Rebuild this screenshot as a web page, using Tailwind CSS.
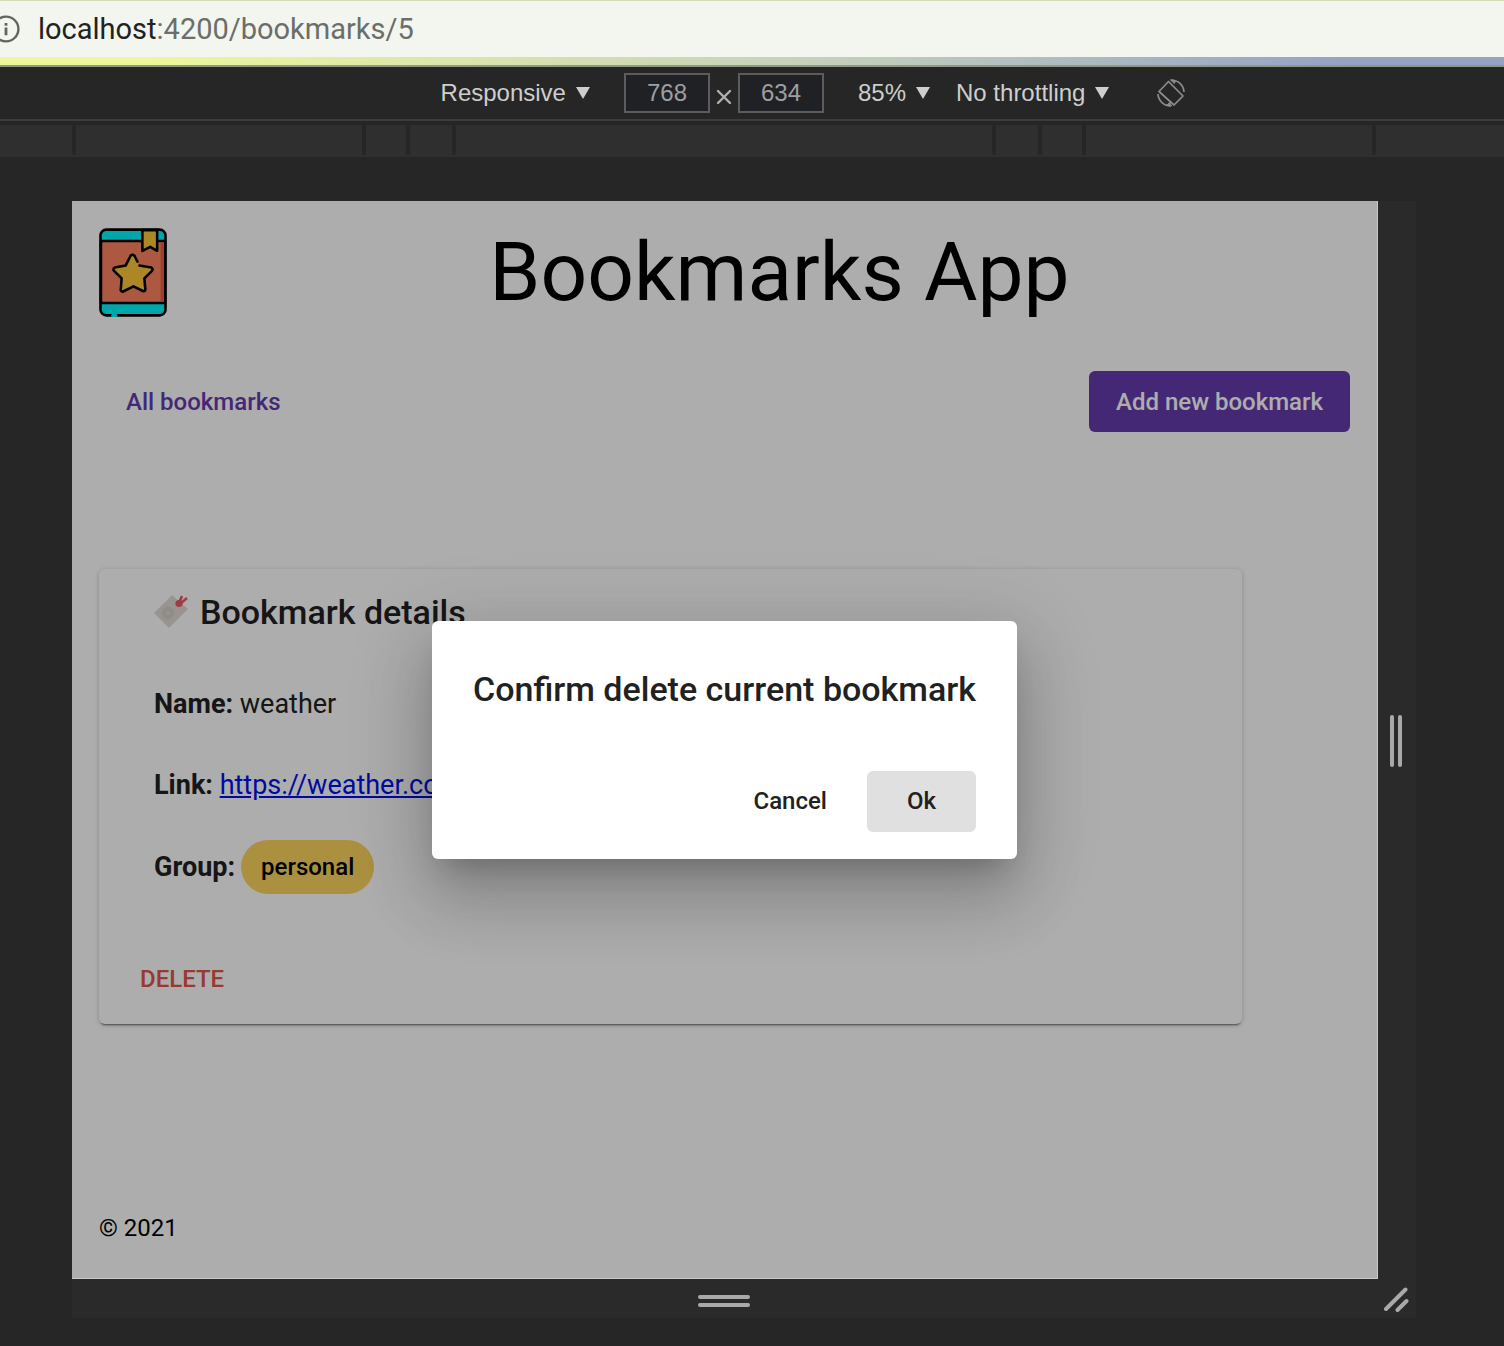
<!DOCTYPE html>
<html lang="en">
<head>
<meta charset="utf-8">
<title>Bookmarks App</title>
<script src="https://cdn.jsdelivr.net/npm/@tailwindcss/browser@4"></script>
</head>
<body class="flex min-h-screen flex-col bg-[#262626] font-['Roboto',sans-serif]">

<!-- Address bar -->
<div class="flex h-[57px] items-center gap-[18px] overflow-hidden border-t border-[#d5dcb4] bg-[#f3f5ef]">
  <svg class="-ml-2 size-7 shrink-0" viewBox="0 0 28 28" fill="none" stroke="#63665f" stroke-width="2.4"><circle cx="14" cy="14" r="12.4"/><path d="M14 12.6v7.6M14 8v2.8" stroke-width="2.8"/></svg>
  <div role="textbox" aria-label="Address" class="text-[29px] leading-8 text-[#6b6e69]"><span class="text-[#202321]">localhost</span>:4200/bookmarks/5</div>
</div>
<div class="h-2.5 border-b-2 border-[#8f9885] bg-linear-to-r from-[#eef69b] from-10% via-[#c4d0bb] via-55% to-[#94a2c4] to-90%"></div>

<!-- Device toolbar -->
<div class="flex h-[54px] items-center justify-center border-b-2 border-[#3c3c3c] pl-[122px] font-['Liberation_Sans',Arial,sans-serif] text-2xl text-[#cecece]">
  <label class="flex items-center gap-[10px]"><select aria-label="Device" class="field-sizing-content appearance-none bg-transparent"><option>Responsive</option></select>
    <svg class="h-3 w-3.5" viewBox="0 0 14 12"><path d="M0 0h14L7 12z" fill="#cecece"/></svg></label>
  <input aria-label="Width" value="768" class="ml-[34px] h-10 w-[86px] border-2 border-[#5c5c5c] bg-[#202124] text-center text-[#9d9fa1]">
  <svg class="mx-1.5 mt-2 size-4" viewBox="0 0 16 16" stroke="#b0b0b0" stroke-width="2.4" stroke-linecap="round"><path d="M2 2l12 12M14 2L2 14"/></svg>
  <input aria-label="Height" value="634" class="h-10 w-[86px] border-2 border-[#5c5c5c] bg-[#202124] text-center text-[#9d9fa1]">
  <label class="ml-[34px] flex items-center gap-[10px]"><select aria-label="Zoom" class="field-sizing-content appearance-none bg-transparent"><option>85%</option></select>
    <svg class="h-3 w-3.5" viewBox="0 0 14 12"><path d="M0 0h14L7 12z" fill="#cecece"/></svg></label>
  <label class="ml-[26px] flex items-center gap-[10px]"><select aria-label="Throttling" class="field-sizing-content appearance-none bg-transparent"><option>No throttling</option></select>
    <svg class="h-3 w-3.5" viewBox="0 0 14 12"><path d="M0 0h14L7 12z" fill="#cecece"/></svg></label>
  <button aria-label="Rotate" class="ml-12"><svg class="size-7" viewBox="0 0 28 28" fill="none" stroke="#8c8c8c" stroke-width="1.7"><path d="M2 12.5 11.5 2.5 26 17 17 26z" stroke-linejoin="round"/><path d="M14 1c7 0 12.600 5 13 12M14 27C7 27 1.400 22 1 15"/><path d="M13.500 1l5 .5-1 3zM14.500 27l-5-.5 3-3z" fill="#8c8c8c" stroke-width="1"/></svg></button>
</div>

<!-- Breakpoint ruler -->
<div class="mt-1 grid h-8 grid-cols-[72px_286fr_40fr_42fr_536fr_42fr_40fr_286fr_128px] gap-1 border-b-2 border-[#2f2f2f]">
  <i class="bg-[#2f2f2f]"></i><i class="bg-[#2f2f2f]"></i><i class="bg-[#2f2f2f]"></i><i class="bg-[#2f2f2f]"></i><i class="bg-[#2f2f2f]"></i><i class="bg-[#2f2f2f]"></i><i class="bg-[#2f2f2f]"></i><i class="bg-[#2f2f2f]"></i><i class="bg-[#2f2f2f]"></i>
</div>

<!-- Emulated device with resize handles -->
<div class="flex grow flex-col pt-11 pr-[88px] pb-7 pl-[72px]">
  <div class="grid grow grid-cols-[1fr_38px] grid-rows-[1fr_39px] bg-[#2a2a2a]">
    <div class="relative flex flex-col border-r border-b border-[#c8c8c8] bg-white">
      <header class="flex items-start gap-[41px] px-[27px] pt-[27px]">
        <svg class="h-[90px] w-[69px] shrink-0" viewBox="0 0 70 91" stroke="#000" stroke-width="2.6" stroke-linejoin="round" stroke-linecap="round">
          <rect x="1.500" y="1.500" width="66" height="87" rx="6" fill="#00f6fb"/>
          <path d="M2 13h65v63H2z" fill="#ff8362"/><path d="M62.500 14.300h3.500v60.400h-3.500z" fill="#e9603f" stroke="none"/>
          <path d="M44 2h15v21l-7-4-8 4z" fill="#ffc638"/>
          <path d="M39 34l-3-6q-2-2-4 0l-5 10-11 2q-2 1-1 3l8 8-1 12q1 2 3 1l10-5 10 5q2 0 2-2l-1-11 8-8q1-2-1-3l-12-2" fill="#ffc638"/>
          <path d="M14 88.500h3" stroke="#00f6fb" stroke-width="3.500"/>
        </svg>
        <h1 class="grow text-center text-[82px] leading-[88px] text-black">Bookmarks App</h1>
      </header>
      <nav class="mt-[53px] flex h-[61px] items-center justify-between px-[27px] text-2xl font-medium">
        <a href="#" class="px-[27px] text-[#653cae]">All bookmarks</a>
        <button class="h-full rounded-md bg-[#653cae] px-[27px] text-white">Add new bookmark</button>
      </nav>
      <main class="mt-[137px] mr-[135px] ml-[27px] flex h-[455px] flex-col rounded-md px-[55px] pt-[23px] text-[27px] text-[#212121] shadow-[0_3px_2px_-2px_rgba(0,0,0,.5),0_1px_5px_rgba(0,0,0,.22)]">
        <h2 class="flex items-center gap-3 text-[34px] leading-10 font-medium">
          <svg class="size-[34px]" viewBox="0 0 34 34"><path d="M18 0 34 14 15 33 0 18z" fill="#e0dbd5"/><g stroke="#cbc5be" stroke-width="1"><path d="M14 11v14M7 18h14M9 13l10 10M19 13L9 23M11.500 12l5 12M16.500 12l-5 12M8 15.500l12 5M8 20.500l12-5"/></g><circle cx="14" cy="18" r="2.500" fill="#ddd8d2"/><circle cx="25" cy="8.500" r="3.600" fill="#e75a60"/><path d="M25 8l3-7M26 9l7-6" stroke="#e75a60" stroke-width="2.600"/></svg>
          Bookmark details</h2>
        <p class="mt-[59px] h-[27px] leading-[27px]"><b>Name:</b> weather</p>
        <p class="mt-[54px] h-[27px] leading-[27px]"><b>Link:</b> <a href="#" class="text-[#0010ee] underline">https://weather.com</a></p>
        <p class="mt-[41px] flex h-[54px] items-center gap-1.5"><b>Group:</b> <span class="flex h-[54px] items-center rounded-full bg-[#fbd55d] px-5 text-2xl font-medium text-black">personal</span></p>
        <button class="mt-[55px] -ml-3.5 self-start text-2xl leading-[60px] font-medium text-[#e05649]">DELETE</button>
      </main>
      <footer class="mt-auto px-[27px] pb-[34px] text-2xl text-black">© 2021</footer>

      <!-- Confirmation dialog -->
      <div class="absolute inset-0 flex items-center justify-center bg-black/32">
        <div role="dialog" aria-labelledby="dlg" class="rounded-md bg-white px-[41px] pt-[41px] pb-[27px] text-[#212121] shadow-[0_19px_26px_-12px_rgba(0,0,0,.2),0_41px_65px_5px_rgba(0,0,0,.14),0_15px_78px_14px_rgba(0,0,0,.12)]">
          <h2 id="dlg" class="text-[34px] leading-[54px] font-medium">Confirm delete current bookmark</h2>
          <div class="mt-[55px] flex justify-end text-2xl font-medium">
            <button class="h-[61px] px-10">Cancel</button>
            <button class="h-[61px] rounded-md bg-[#e0e0e0] px-10">Ok</button>
          </div>
        </div>
      </div>
    </div>
    <div class="flex items-center justify-center gap-1 pt-0.5 pr-0.5"><i class="h-[52px] w-1 rounded-full bg-[#a9a9a9]"></i><i class="h-[52px] w-1 rounded-full bg-[#a9a9a9]"></i></div>
    <div class="flex flex-col items-center justify-center gap-1 pt-1 pr-0.5"><i class="h-1 w-[52px] rounded-full bg-[#a9a9a9]"></i><i class="h-1 w-[52px] rounded-full bg-[#a9a9a9]"></i></div>
    <div class="flex items-center justify-center pr-0.5 pb-0.5"><svg class="size-7" viewBox="0 0 28 28" stroke="#a9a9a9" stroke-width="4" stroke-linecap="round"><path d="M4 25 23.500 5.500M15.500 26l9-9"/></svg></div>
  </div>
</div>
</body>
</html>
